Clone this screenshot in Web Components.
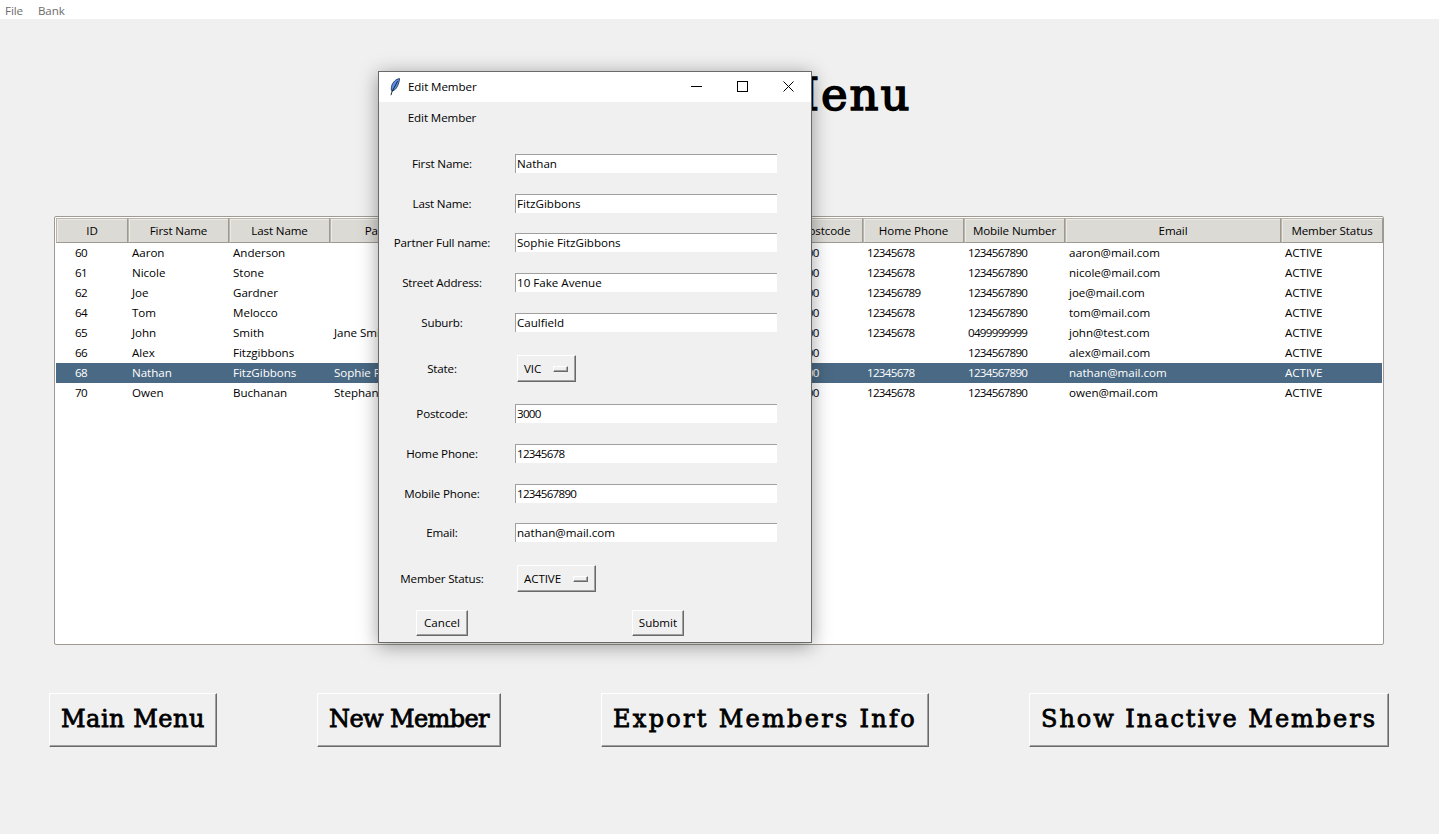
<!DOCTYPE html>
<html><head><meta charset="utf-8"><title>Members Menu</title>
<style>
html,body{margin:0;padding:0;height:834px;overflow:hidden;background:#f0f0f0;color:#000;font-family:"Open Sans","Noto Sans",sans-serif;font-size:12px}
</style></head>
<body>
<app-menubar><span>File</span><span>Bank</span></app-menubar>
<page-title>Members Menu</page-title>
<members-table></members-table>
<action-bar>
  <big-button>Main Menu</big-button>
  <big-button>New Member</big-button>
  <big-button>Export Members Info</big-button>
  <big-button>Show Inactive Members</big-button>
</action-bar>
<edit-dialog></edit-dialog>
<script>
const UI='"Open Sans","Noto Sans",sans-serif';
const SLAB='"DejaVu Serif","Liberation Serif",serif';
function shadow(el,html){el.attachShadow({mode:'open'}).innerHTML=html;}
const cv=document.createElement('canvas').getContext('2d');
function fitCells(el,px,cell){cv.font=px+'px "DejaVu Serif"';const t=el.textContent.trim();const w=cv.measureText(t).width;
  el.style.letterSpacing=((t.length*cell-w)/t.length).toFixed(3)+'px';return t.length*cell;}
customElements.define('app-menubar',class extends HTMLElement{constructor(){super();shadow(this,`<style>
:host{display:flex;box-sizing:border-box;height:19px;background:#fff;padding:1px 0 0 5px;gap:15px;color:#6d6d6d;font:11.6px/19px ${UI};letter-spacing:-.1px}
</style><slot></slot>`);}});
customElements.define('page-title',class extends HTMLElement{constructor(){super();shadow(this,`<style>
:host{display:block;height:197px;box-sizing:border-box;padding-top:45px;font:45px/62px ${SLAB};color:#000;-webkit-text-stroke:1.6px #000}
div{margin:0 auto;white-space:pre}
</style><div><slot></slot></div>`);}
connectedCallback(){const w=fitCells(this,45,32);this.shadowRoot.querySelector('div').style.width=w+'px';}});
const COLS=[['ID',72],['First Name',101],['Last Name',101],['Partner Name',144],['',115],['',100],['',100],['Postcode',74],['Home Phone',101],['Mobile Number',101],['Email',216],['Member Status',102]];
const ROWS=[
['60','Aaron','Anderson','','','','','3000','12345678','1234567890','aaron@mail.com','ACTIVE'],
['61','Nicole','Stone','','','','','3000','12345678','1234567890','nicole@mail.com','ACTIVE'],
['62','Joe','Gardner','','','','','3000','123456789','1234567890','joe@mail.com','ACTIVE'],
['64','Tom','Melocco','','','','','3000','12345678','1234567890','tom@mail.com','ACTIVE'],
['65','John','Smith','Jane Smith','','','','3000','12345678','0499999999','john@test.com','ACTIVE'],
['66','Alex','Fitzgibbons','','','','','3000','','1234567890','alex@mail.com','ACTIVE'],
['68','Nathan','FitzGibbons','Sophie FitzGibbons','','','','3000','12345678','1234567890','nathan@mail.com','ACTIVE'],
['70','Owen','Buchanan','Stephanie','','','','3000','12345678','1234567890','owen@mail.com','ACTIVE']];
customElements.define('members-table',class extends HTMLElement{constructor(){super();
const tpl=COLS.map(c=>c[1]+'px').join(' ');
const head=COLS.map(c=>`<div class="h">${c[0]}</div>`).join('');
const body=ROWS.map(r=>`<div class="r${r[0]==='68'?' sel':''}">`+r.map((v,i)=>`<div class="c${i==0?' id':i==7?' pc':''}${/^\d+$/.test(v)?' num':''}">${v}</div>`).join('')+`</div>`).join('');
shadow(this,`<style>
:host{display:block;box-sizing:border-box;width:1330px;height:429px;margin-left:54px;background:#fff;border:1px solid #9e9a91;border-radius:2px;padding:1px;font:11.6px/20px ${UI};color:#000;overflow:hidden}
.head,.r{display:grid;grid-template-columns:${tpl}}
.head{height:25px}
.h{box-sizing:border-box;height:25px;line-height:24px;text-align:center;letter-spacing:-.12px;background:#dcdad5;border:1px solid #9e9a91;border-top-color:#bab5ab;border-left-color:#bab5ab;box-shadow:inset 1px 1px 0 #eeebe7;white-space:nowrap;overflow:hidden}
.r{height:20px}
.c{padding-left:4px;white-space:nowrap;overflow:hidden;letter-spacing:-.03px}
.num{letter-spacing:-.7px}
.id{padding-left:19px}.pc{padding-left:6px}
.sel{background:#4a6984;color:#fff}
</style><div class="head">${head}</div>${body}`);}});
customElements.define('action-bar',class extends HTMLElement{constructor(){super();shadow(this,`<style>
:host{display:flex;justify-content:center;gap:100px;margin-top:48px;margin-left:-1px}
</style><slot></slot>`);}});
customElements.define('big-button',class extends HTMLElement{constructor(){super();shadow(this,`<style>
:host{display:block;box-sizing:content-box;height:52px;padding:0 11px 0 11px;background:#f0f0f0;border:1px solid;border-color:#fff #696969 #696969 #fff;box-shadow:inset -1px -1px 0 #a0a0a0;font:24px/50px ${SLAB};color:#000;-webkit-text-stroke:.8px #000;white-space:pre}
</style><slot></slot>`);}
connectedCallback(){const w=fitCells(this,24,16);this.style.width=w+'px';}});
customElements.define('tk-entry',class extends HTMLElement{constructor(){super();shadow(this,`<style>
:host{display:block;box-sizing:border-box;width:262px;height:19px;background:#fff;border-top:1px solid #a0a0a0;border-left:1px solid #a0a0a0;padding-left:1px;font:11.6px/18px ${UI};color:#000;white-space:nowrap}
:host(.num){letter-spacing:-.7px}
</style><slot></slot>`);}});
customElements.define('tk-option',class extends HTMLElement{constructor(){super();shadow(this,`<style>
:host{display:inline-flex;box-sizing:border-box;height:27px;margin-left:2px;align-items:center;justify-content:space-between;background:#f0f0f0;border:1px solid;border-color:#fff #696969 #696969 #fff;box-shadow:inset -1px -1px 0 #a0a0a0;padding:0 7px 0 6px;font:11.6px/25px ${UI};letter-spacing:-.1px;color:#000}
i{display:block;box-sizing:border-box;width:15px;height:6px;background:#f0f0f0;border:1px solid;border-color:#fff #696969 #696969 #fff;box-shadow:inset -1px -1px 0 #a0a0a0}
</style><slot></slot><i></i>`);}});
customElements.define('tk-button',class extends HTMLElement{constructor(){super();shadow(this,`<style>
:host{display:inline-block;box-sizing:border-box;height:26px;background:#f0f0f0;border:1px solid;border-color:#fff #696969 #696969 #fff;box-shadow:inset -1px -1px 0 #a0a0a0;text-align:center;font:11.6px/24px ${UI};color:#000}
</style><slot></slot>`);}});
customElements.define('title-bar',class extends HTMLElement{constructor(){super();shadow(this,`<style>
:host{display:flex;height:30px;background:#fff;align-items:center;font:11.6px/30px ${UI};letter-spacing:-.1px;color:#000}
.ic{width:29px;padding-left:10px;box-sizing:border-box;display:flex}
.t{flex:1}
.b{display:flex;width:46px;height:30px;align-items:center;justify-content:center;position:relative;top:-1px}
</style>
<div class="ic"><svg width="12" height="18" viewBox="0 0 12 18"><path d="M10.6 .6C7 1 3.6 4.2 2.6 8.2 2.1 10.4 2.2 12 2.9 13.2 5.6 12.6 7.6 10.2 8.8 7.4 9.8 5.2 10.4 2.8 10.6 .6Z" fill="#5b90e4" stroke="#14264a" stroke-width=".8"/><path d="M8.6 3.2 3 13.6 2 17.2" fill="none" stroke="#0a1530" stroke-width=".9"/></svg></div>
<div class="t"><slot></slot></div>
<div class="b"><svg width="11" height="11"><path d="M0 5.5H11" stroke="#000" fill="none"/></svg></div>
<div class="b"><svg width="11" height="11"><rect x=".5" y=".5" width="10" height="10" stroke="#000" fill="none"/></svg></div>
<div class="b"><svg width="11" height="11"><path d="M.5 .5 10.5 10.5M10.5 .5 .5 10.5" stroke="#000" fill="none"/></svg></div>`);}});
customElements.define('edit-dialog',class extends HTMLElement{constructor(){super();
const f=[['First Name:','Nathan',40],['Last Name:','FitzGibbons',39],['Partner Full name:','Sophie FitzGibbons',40],['Street Address:','10 Fake Avenue',40],['Suburb:','Caulfield',42]];
const g=[['Postcode:','3000',40],['Home Phone:','12345678',40],['Mobile Phone:','1234567890',39],['Email:','nathan@mail.com',42]];
const row=a=>`<div class="row" style="height:${a[2]}px"><span class="l">${a[0]}</span><tk-entry class="${/^\d+$/.test(a[1])?'num':''}">${a[1]}</tk-entry></div>`;
shadow(this,`<style>
:host{position:absolute;left:378px;top:71px;box-sizing:border-box;width:434px;height:572px;background:#f0f0f0;border:1px solid #6a6a6a;box-shadow:0 3px 18px rgba(0,0,0,.38);font:11.6px/19px ${UI};color:#000}
.head{height:52px;padding-top:6px;box-sizing:border-box;width:126px;text-align:center;letter-spacing:-.1px}
.row{display:grid;grid-template-columns:126px 262px;column-gap:10px;align-items:start}
.l{text-align:center;white-space:nowrap;letter-spacing:-.17px}
.opt .l{line-height:27px}
.btns{display:flex;padding-left:37px;gap:164px}
.cancel{width:52px}.submit{width:52px}
</style>
<title-bar>Edit Member</title-bar>
<div class="head">Edit Member</div>
${f.map(row).join('')}
<div class="row opt" style="height:49px"><span class="l">State:</span><div><tk-option style="width:59px">VIC</tk-option></div></div>
${g.map(row).join('')}
<div class="row opt" style="height:45px"><span class="l">Member Status:</span><div><tk-option style="width:79px">ACTIVE</tk-option></div></div>
<div class="btns"><tk-button class="cancel">Cancel</tk-button><tk-button class="submit">Submit</tk-button></div>`);}});
</script>
</body></html>
